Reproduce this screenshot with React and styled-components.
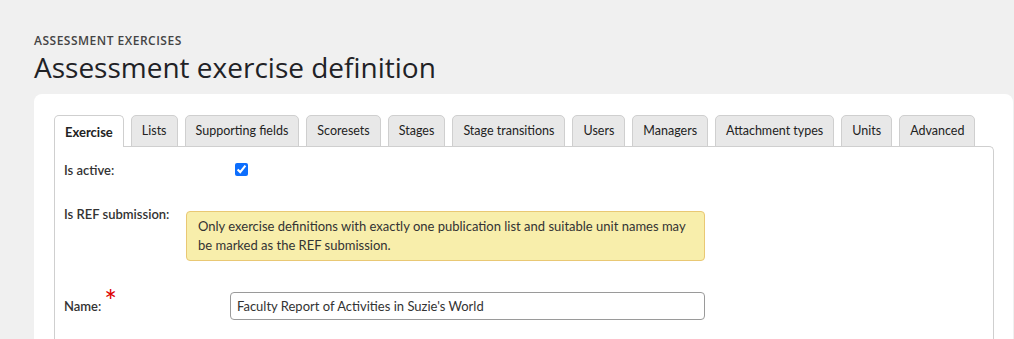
import React, { useState } from 'react';
import styled, { createGlobalStyle } from 'styled-components';

const GlobalStyle = createGlobalStyle`
  html, body { margin: 0; padding: 0; background: #f0f0f0; }
  body { font-family: Lato, "Open Sans", sans-serif; color: #222; }
`;

const Page = styled.div`
  padding: 33px 1px 0 34px;
`;

const Breadcrumb = styled.div`
  font-family: "Open Sans", sans-serif;
  font-size: 12px;
  font-weight: 600;
  letter-spacing: 0.5px;
  color: #444;
  text-transform: uppercase;
  line-height: 16px;
`;

const Title = styled.h1`
  margin: 0 0 9px;
  font-family: "Open Sans", sans-serif;
  font-size: 28px;
  font-weight: 500;
  line-height: 36px;
  color: #1f2226;
`;

const Card = styled.div`
  box-sizing: border-box;
  background: #fff;
  border-radius: 8px 8px 0 0;
  padding: 21px 19px 0 20px;
  height: 245px;
`;

const TabBar = styled.div`
  display: flex;
  gap: 7px;
  position: relative;
  z-index: 1;
`;

const Tab = styled.button`
  height: 32px;
  padding: 0 10px;
  border: 1px solid #cfcfcf;
  border-bottom: ${p => (p.$active ? 'none' : '1px solid #cfcfcf')};
  border-radius: 5px 5px 0 0;
  background: ${p => (p.$active ? '#fff' : '#e8e8e8')};
  font-family: Lato, sans-serif;
  font-size: ${p => (p.$active ? '13px' : '12.5px')};
  font-weight: ${p => (p.$active ? 700 : 400)};
  color: #222;
  cursor: pointer;
  line-height: 30px;
`;

const Panel = styled.div`
  box-sizing: border-box;
  border: 1px solid #cfcfcf;
  border-bottom: none;
  border-radius: 0 5px 0 0;
  margin-top: -1px;
  padding: 14px 10px 0 9px;
  height: 193px;
`;

const Row = styled.div`
  display: grid;
  grid-template-columns: ${p => p.$labelWidth || '166px'} 1fr;
  align-items: start;
  margin-bottom: ${p => p.$gap || '0'};
`;

const Label = styled.label`
  font-size: 13px;
  font-weight: 600;
  color: #333;
  line-height: 16px;
  padding-top: ${p => p.$top || '0'};
`;

const Required = styled.span`
  color: #d00;
  font-size: 30px;
  font-weight: 400;
  margin-left: 3px;
  position: relative;
  top: -6px;
  vertical-align: top;
  line-height: 16px;
`;

const Check = styled.input`
  width: 13px;
  height: 13px;
  margin: 2px 0 0 5px;
  accent-color: #0d6efd;
`;

const Notice = styled.div`
  margin-top: 5px;
  width: 494px;
  background: #f8eeab;
  border: 1px solid #e9c874;
  border-radius: 4px;
  padding: 5px 12px 5px 11px;
  font-size: 13px;
  line-height: 19px;
  color: #333;
`;

const TextInput = styled.input`
  box-sizing: border-box;
  width: 475px;
  height: 28px;
  border: 1px solid #9a9a9a;
  border-radius: 4px;
  padding: 0 6px;
  font-family: Lato, sans-serif;
  font-size: 13px;
  color: #333;
  outline: none;
`;

const tabs = [
  'Exercise', 'Lists', 'Supporting fields', 'Scoresets', 'Stages',
  'Stage transitions', 'Users', 'Managers', 'Attachment types', 'Units', 'Advanced',
];

const App = () => {
  const [active, setActive] = useState('Exercise');
  const [name, setName] = useState("Faculty Report of Activities in Suzie's World");

  return (
    <>
      <GlobalStyle />
      <Page>
        <Breadcrumb>Assessment exercises</Breadcrumb>
        <Title>Assessment exercise definition</Title>
        <Card>
          <TabBar>
            {tabs.map(t => (
              <Tab key={t} $active={t === active} onClick={() => setActive(t)}>{t}</Tab>
            ))}
          </TabBar>
          <Panel>
            <Row $gap="28px">
              <Label $top="1px">Is active:</Label>
              <Check type="checkbox" defaultChecked />
            </Row>
            <Row $labelWidth="122px" $gap="31px">
              <Label $top="0">Is REF submission:</Label>
              <Notice>
                Only exercise definitions with exactly one publication list and suitable unit names may
                be marked as the REF submission.
              </Notice>
            </Row>
            <Row>
              <Label $top="6px">Name:<Required>*</Required></Label>
              <TextInput value={name} onChange={e => setName(e.target.value)} />
            </Row>
          </Panel>
        </Card>
      </Page>
    </>
  );
};

export default App;
